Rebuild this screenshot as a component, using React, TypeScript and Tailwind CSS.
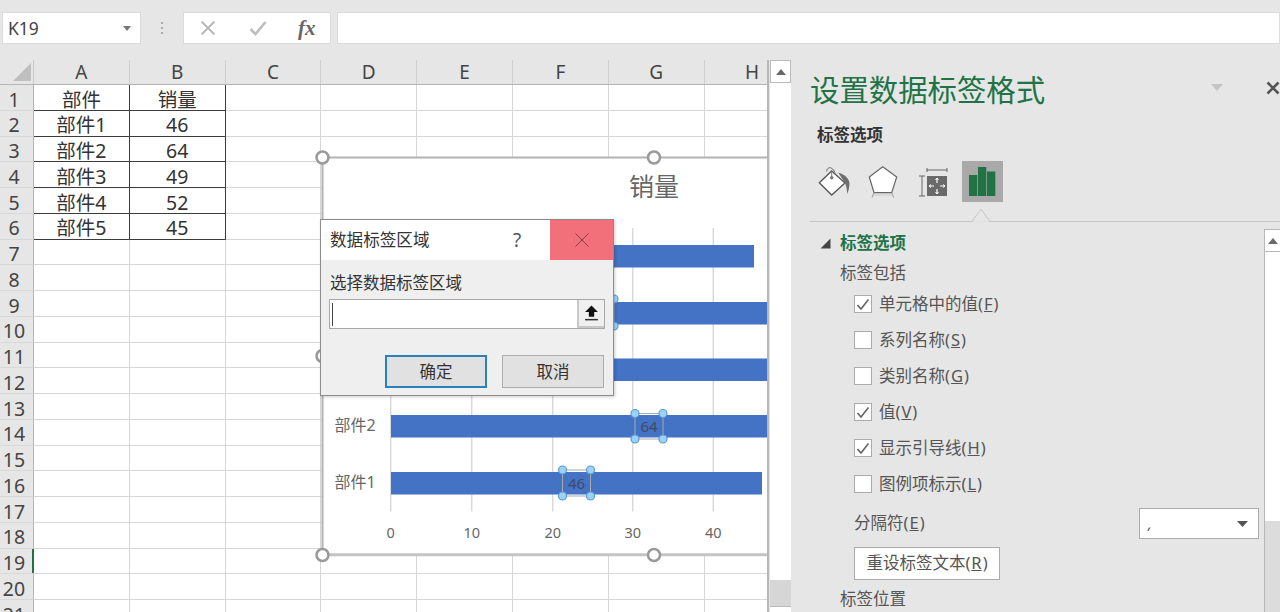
import React from "react";

const cols = ["A", "B", "C", "D", "E", "F", "G", "H"];
const tableData: Record<number, [string, string]> = {
  1: ["部件", "销量"],
  2: ["部件1", "46"],
  3: ["部件2", "64"],
  4: ["部件3", "49"],
  5: ["部件4", "52"],
  6: ["部件5", "45"],
};
const rows = Array.from({ length: 21 }, (_, i) => i + 1);

function Grid() {
  return (
    <div className="w-[767px] shrink-0 flex flex-col overflow-hidden">
      <div className="flex h-[25px] shrink-0 border-b border-[#b4b4b4] bg-[#e6e6e6]">
        <div className="w-[34px] shrink-0 relative border-r border-[#c8c8c8]">
          <svg width="33" height="24" className="block">
            <path d="M31 3 V21 H13 Z" fill="#bfbfbf" />
          </svg>
        </div>
        {cols.map((c) => (
          <div
            key={c}
            className="w-[95.8px] shrink-0 border-r border-[#cfcfcf] text-center text-[19px] leading-[25px] text-[#444]"
          >
            {c}
          </div>
        ))}
      </div>
      {rows.map((r) => (
        <div key={r} className="flex h-[25.75px] shrink-0">
          <div className="w-[34px] shrink-0 bg-[#e6e6e6] border-r border-b border-r-[#b4b4b4] border-b-[#d8d8d8] pr-[5px] pt-[1.5px] text-center text-[19.5px] leading-[25px] text-[#444] relative">
            {r}
            {r === 19 && <span className="absolute right-[-1px] top-0 h-full w-[2px] bg-[#217346]" />}
          </div>
          {cols.map((c, i) => {
            const data = tableData[r];
            const inTable = data && i < 2;
            return (
              <div
                key={c}
                className={`w-[95.8px] shrink-0 pt-[1.5px] text-center text-[19.5px] leading-[25px] bg-white text-[#333] border-r border-b ${
                  inTable ? "border-[#3c3c3c]" : "border-[#d6d6d6]"
                }`}
              >
                {inTable ? data[i] : ""}
              </div>
            );
          })}
        </div>
      ))}
    </div>
  );
}

function Handle({ x, y }: { x: number; y: number }) {
  return <circle cx={x} cy={y} r="6" fill="#fff" stroke="#9a9a9a" strokeWidth="2.5" />;
}

function LabelBox({ x, y, w, h, text }: { x: number; y: number; w: number; h: number; text?: string }) {
  return (
    <g>
      <rect x={x} y={y} width={w} height={h} fill="none" stroke="#a8a8a8" strokeWidth="1" />
      {text && (
        <text x={x + w / 2} y={y + h / 2 + 5.5} textAnchor="middle" fontSize="15" fill="#404a66">
          {text}
        </text>
      )}
      {[
        [x, y],
        [x + w, y],
        [x, y + h],
        [x + w, y + h],
      ].map(([a, b], i) => (
        <circle key={i} cx={a} cy={b} r="4" fill="#9dd2f7" stroke="#5b9bd5" strokeWidth="1.2" />
      ))}
    </g>
  );
}

function Chart() {
  const bars = [
    [245, 22.5, 754],
    [302, 22.5, 780],
    [358.5, 22.5, 780],
    [415, 22.5, 780],
    [472, 22.5, 762],
  ];
  return (
    <svg className="absolute left-0 top-0" width="767" height="552" viewBox="0 60 767 552">
      <rect x="322.5" y="157.5" width="460" height="397" fill="#fff" stroke="#b2b2b2" strokeWidth="2" />
      <line x1="322" y1="555" x2="767" y2="555" stroke="#c4c4c4" strokeWidth="2.5" />
      <text x="654" y="196" textAnchor="middle" fontSize="25" fill="#666">销量</text>
      {[390.7, 471.7, 552.7, 632.7, 713.3].map((x) => (
        <line key={x} x1={x} y1="228" x2={x} y2="511.5" stroke="#d9d9d9" strokeWidth="1.5" />
      ))}
      {bars.map(([y, h, end]) => (
        <rect key={y} x="391" y={y} width={end - 391} height={h} fill="#4472c4" />
      ))}
      <text x="334.5" y="431" fontSize="16" fill="#666">部件2</text>
      <text x="334.5" y="488" fontSize="16" fill="#666">部件1</text>
      {[
        [390.7, "0"],
        [471.7, "10"],
        [552.7, "20"],
        [632.7, "30"],
        [713.3, "40"],
      ].map(([x, t]) => (
        <text key={t} x={x} y="538" textAnchor="middle" fontSize="14.5" fill="#666">
          {t}
        </text>
      ))}
      <LabelBox x={635} y={413.5} w={28} h={25.5} text="64" />
      <LabelBox x={562.5} y={470} w={28} h={26} text="46" />
      <LabelBox x={586} y={299} w={28} h={27} />
      <Handle x={322.5} y={157.5} />
      <Handle x={654} y={157.5} />
      <Handle x={322.5} y={356} />
      <Handle x={322.5} y={555} />
      <Handle x={654} y={555} />
    </svg>
  );
}

function Dialog() {
  return (
    <div className="absolute left-[320px] top-[159px] w-[294px] h-[177px] bg-[#efefef] border border-[#8c8c8c] shadow-[1px_1px_3px_rgba(0,0,0,0.2)] flex flex-col z-10">
      <div className="flex h-[40px] shrink-0 bg-white">
        <div className="flex-1 pl-[9px] text-[16.6px] leading-[40px] text-[#333]">数据标签区域</div>
        <div className="w-[37px] text-[19px] leading-[40px] text-[#555]">?</div>
        <div className="w-[63px] bg-[#f1707a] flex items-center justify-center">
          <svg width="16" height="16" viewBox="0 0 16 16">
            <path d="M1.5 1.5 L14.5 14.5 M14.5 1.5 L1.5 14.5" stroke="#8a3a42" strokeWidth="1" fill="none" />
          </svg>
        </div>
      </div>
      <div className="pl-[9px] mt-[10px] text-[16.5px] leading-[26px] text-[#333]">选择数据标签区域</div>
      <div className="ml-[8px] mt-[3px] w-[276px] h-[30px] border border-[#a8a8a8] bg-white flex items-center shrink-0">
        <div className="ml-[2px] w-[1px] h-[23px] bg-[#444]" />
        <div className="ml-auto w-[27px] h-full border-l-2 border-b-2 border-[#c8c8c8] bg-[#f0f0f0] flex items-center justify-center">
          <svg width="15" height="18" viewBox="0 0 14 16">
            <path d="M7 1 L13 7 H9.5 V11.5 H4.5 V7 H1 Z" fill="#111" />
            <rect x="1" y="13.5" width="12" height="1.4" fill="#333" />
          </svg>
        </div>
      </div>
      <div className="flex justify-end gap-[15px] mt-[26px] pr-[9px]">
        <button className="w-[102px] h-[33px] pt-[1px] border-2 border-[#2a82bd] bg-[#e1e1e1] text-[16.5px] text-[#333]">确定</button>
        <button className="w-[102px] h-[33px] pt-[1px] border border-[#adadad] bg-[#e1e1e1] text-[16.5px] text-[#333]">取消</button>
      </div>
    </div>
  );
}

function ScrollArrow({ size = 10 }: { size?: number }) {
  return (
    <svg width={size} height={size * 0.6} viewBox="0 0 10 6">
      <path d="M5 0 L10 6 H0 Z" fill="#6a6a6a" />
    </svg>
  );
}

function Accel({ label, k }: { label: string; k: string }) {
  return (
    <>
      {label}(<u className="mx-[1px]">{k}</u>)
    </>
  );
}

function CheckRow({ checked, label, k }: { checked: boolean; label: string; k: string }) {
  return (
    <div className="flex items-center h-[36px] pl-[61px]">
      <div className="w-[18px] h-[18px] border border-[#ababab] bg-white flex items-center justify-center shrink-0">
        {checked && (
          <svg width="14" height="13" viewBox="0 0 14 13">
            <path d="M1.5 7 L5 11 L12.5 1.5" fill="none" stroke="#666" strokeWidth="1.7" />
          </svg>
        )}
      </div>
      <span className="ml-[7px] text-[16.5px] text-[#555] leading-[34px]">
        <Accel label={label} k={k} />
      </span>
    </div>
  );
}

function Panel() {
  return (
    <div className="flex-1 min-w-0 flex flex-col bg-[#e6e6e6] overflow-hidden">
      <div className="h-[60px] shrink-0 flex items-center pl-[17px]">
        <span className="text-[29.4px] text-[#217346] leading-[60px] whitespace-nowrap shrink-0">设置数据标签格式</span>
        <svg className="ml-[166px] mb-[5px] shrink-0" width="12" height="7" viewBox="0 0 12 7">
          <path d="M0 0 H12 L6 7 Z" fill="#c4c4c4" />
        </svg>
        <svg className="ml-[43px] mb-[5px] shrink-0" width="14" height="14" viewBox="0 0 14 14">
          <path d="M1.5 1.5 L12.5 12.5 M12.5 1.5 L1.5 12.5" stroke="#555" strokeWidth="2.6" />
        </svg>
      </div>
      <div className="h-[30px] shrink-0 pl-[24px] text-[16.5px] font-bold leading-[30px] text-[#333]">标签选项</div>
      <div className="h-[41px] mt-[11px] shrink-0 flex items-center pl-[24px]">
        <svg width="34" height="34" viewBox="0 0 34 34" className="shrink-0">
          <path d="M14.7 6 L28 18 L14.7 30 L2.3 17.7 Z" fill="#fff" stroke="#555" strokeWidth="1.3" />
          <path d="M9.7 6.5 C9.7 2 15 0.5 18 7.7" fill="none" stroke="#666" strokeWidth="1" />
          <path d="M14.7 6 V12.7" stroke="#777" strokeWidth="1" />
          <circle cx="14.7" cy="12.7" r="1.7" fill="#777" />
          <path d="M21.3 7.7 C27 9 32 13 32.5 18 C32.5 22 31.5 26 30.3 29 C30 25 29.5 21 28 18 Z" fill="#6e6e6e" />
        </svg>
        <svg width="32" height="34" viewBox="0 0 32 34" className="ml-[16px] shrink-0">
          <path d="M15.7 1.7 L29.7 12 L24.7 27.7 H7 L2.3 12 Z" fill="#fff" stroke="#666" strokeWidth="1.2" />
          <path d="M7 27.7 L5 32.5 M24.7 27.7 L26.7 32.5" stroke="#999" strokeWidth="1" />
          <path d="M7 30 H24.7" stroke="#d8d8d8" strokeWidth="2" />
        </svg>
        <svg width="32" height="32" viewBox="0 0 32 32" className="ml-[18px] shrink-0">
          <path d="M10 2 V6 M10 4 H30 M30 2 V6 M2 10 H8 M5 10 V30 M2 30 H8" stroke="#666" strokeWidth="1" fill="none" />
          <rect x="10" y="10" width="20" height="20" fill="#6a6a6a" />
          <path d="M20 12 V17 M20 23 V28 M12 20 H17 M23 20 H28" stroke="#fff" strokeWidth="1.2" />
          <path d="M18.5 14 L20 12 L21.5 14 M18.5 26 L20 28 L21.5 26 M14 18.5 L12 20 L14 21.5 M26 18.5 L28 20 L26 21.5" stroke="#fff" strokeWidth="1" fill="none" />
        </svg>
        <div className="ml-[13px] w-[41px] h-[41px] bg-[#a9a9a9] flex items-center justify-center shrink-0">
          <svg width="27" height="29" viewBox="0 0 27 29">
            <rect x="0" y="8" width="8.3" height="21" fill="#217346" />
            <rect x="9" y="0" width="8.3" height="29" fill="#217346" />
            <rect x="18" y="4.5" width="8.3" height="24.5" fill="#217346" />
          </svg>
        </div>
      </div>
      <div className="ml-[17px] mt-[7px] h-[13px] shrink-0 relative border-b border-[#c6c6c6]">
        <svg className="absolute left-[162px] bottom-[-1px]" width="18" height="14" viewBox="0 0 18 14">
          <path d="M0 13.5 L9 1 L18 13.5" fill="#e6e6e6" stroke="#c6c6c6" strokeWidth="1" />
          <path d="M1 14 H17" stroke="#e6e6e6" strokeWidth="1.5" />
        </svg>
      </div>
      <div className="flex-1 min-h-0 flex mt-[7px]">
        <div className="flex-1 min-w-0 flex flex-col">
          <div className="h-[28px] shrink-0 flex items-center pl-[27px]">
            <svg width="11" height="11" viewBox="0 0 11 11">
              <path d="M10.5 0.5 V10.5 H0.5 Z" fill="#444" />
            </svg>
            <span className="ml-[9px] text-[16.5px] font-bold text-[#217346]">标签选项</span>
          </div>
          <div className="h-[26px] mt-[3px] shrink-0 pl-[47px] text-[16.5px] leading-[26px] text-[#555]">标签包括</div>
          <CheckRow checked label="单元格中的值" k="F" />
          <CheckRow checked={false} label="系列名称" k="S" />
          <CheckRow checked={false} label="类别名称" k="G" />
          <CheckRow checked label="值" k="V" />
          <CheckRow checked label="显示引导线" k="H" />
          <CheckRow checked={false} label="图例项标示" k="L" />
          <div className="mt-[6px] h-[31px] shrink-0 flex items-center pl-[61px] pr-[5px] justify-between">
            <span className="text-[16.5px] text-[#555]">
              <Accel label="分隔符" k="E" />
            </span>
            <div className="w-[120px] h-[31px] border border-[#ababab] bg-white flex items-center justify-between pl-[8px] pr-[10px]">
              <span className="text-[14px] italic text-[#555]">,</span>
              <svg width="11" height="6" viewBox="0 0 11 6">
                <path d="M0 0 H11 L5.5 6 Z" fill="#555" />
              </svg>
            </div>
          </div>
          <div className="mt-[8px] pl-[61px] shrink-0">
            <button className="w-[146px] h-[33px] border border-[#ababab] bg-white text-[16.5px] text-[#555] whitespace-nowrap">
              <Accel label="重设标签文本" k="R" />
            </button>
          </div>
          <div className="mt-[6px] h-[26px] shrink-0 pl-[47px] text-[16.5px] leading-[26px] text-[#555]">标签位置</div>
        </div>
        <div className="w-[16px] shrink-0 flex flex-col border-l border-[#b8b8b8]">
          <div className="h-[23px] bg-white border-y border-[#b8b8b8] flex items-center justify-center">
            <ScrollArrow />
          </div>
          <div className="h-[269px] bg-white" />
          <div className="flex-1 bg-[#dcdcdc]" />
        </div>
      </div>
    </div>
  );
}

export default function App() {
  return (
    <div className="w-[1280px] h-[612px] overflow-hidden flex flex-col bg-[#e6e6e6] [font-family:'Noto_Sans','Noto_Sans_CJK_SC',sans-serif]">
      <div className="h-[60px] shrink-0 flex items-start pt-[12px] pl-[2px]">
        <div className="w-[139px] h-[32px] bg-white border border-[#dcdcdc] flex items-center justify-between pl-[5px] pr-[9px] shrink-0">
          <span className="text-[17.5px] text-[#444]">K19</span>
          <svg width="8" height="5" viewBox="0 0 8 5">
            <path d="M0 0 H8 L4 5 Z" fill="#777" />
          </svg>
        </div>
        <div className="w-[42px] h-[32px] shrink-0 flex flex-col items-center justify-center gap-[3px]">
          <span className="w-[2px] h-[2px] bg-[#aaa]" />
          <span className="w-[2px] h-[2px] bg-[#aaa]" />
          <span className="w-[2px] h-[2px] bg-[#aaa]" />
        </div>
        <div className="w-[148px] h-[32px] bg-white border border-[#dcdcdc] flex items-center pl-[16px] shrink-0">
          <svg width="16" height="16" viewBox="0 0 16 16" className="shrink-0">
            <path d="M1.5 1.5 L14.5 14.5 M14.5 1.5 L1.5 14.5" stroke="#b8b8b8" strokeWidth="2" />
          </svg>
          <svg width="18" height="16" viewBox="0 0 18 16" className="ml-[33px] shrink-0">
            <path d="M1.5 9 L6.5 14 L16.5 2" fill="none" stroke="#bdbdbd" strokeWidth="2.6" />
          </svg>
          <span className="ml-[31px] [font-family:'Liberation_Serif',serif] italic font-bold text-[21px] text-[#666] leading-none">fx</span>
        </div>
        <div className="ml-[6px] flex-1 h-[32px] bg-white border border-[#dcdcdc]" />
      </div>
      <div className="flex-1 min-h-0 flex">
        <div className="w-[793px] shrink-0 flex relative overflow-hidden">
          <Grid />
          <Chart />
          <Dialog />
          <div className="w-[26px] shrink-0 flex flex-col border-l-2 border-[#b6b6b6] pr-[2px] pl-[1px]">
            <div className="h-[23px] bg-white border border-[#bbbbbb] flex items-center justify-center shrink-0">
              <ScrollArrow />
            </div>
            <div className="h-[497px] bg-white shrink-0" />
            <div className="h-[26px] bg-[#d6d6d6] shrink-0" />
            <div className="flex-1 bg-white border-t border-[#bbbbbb]" />
          </div>
        </div>
        <Panel />
      </div>
    </div>
  );
}
